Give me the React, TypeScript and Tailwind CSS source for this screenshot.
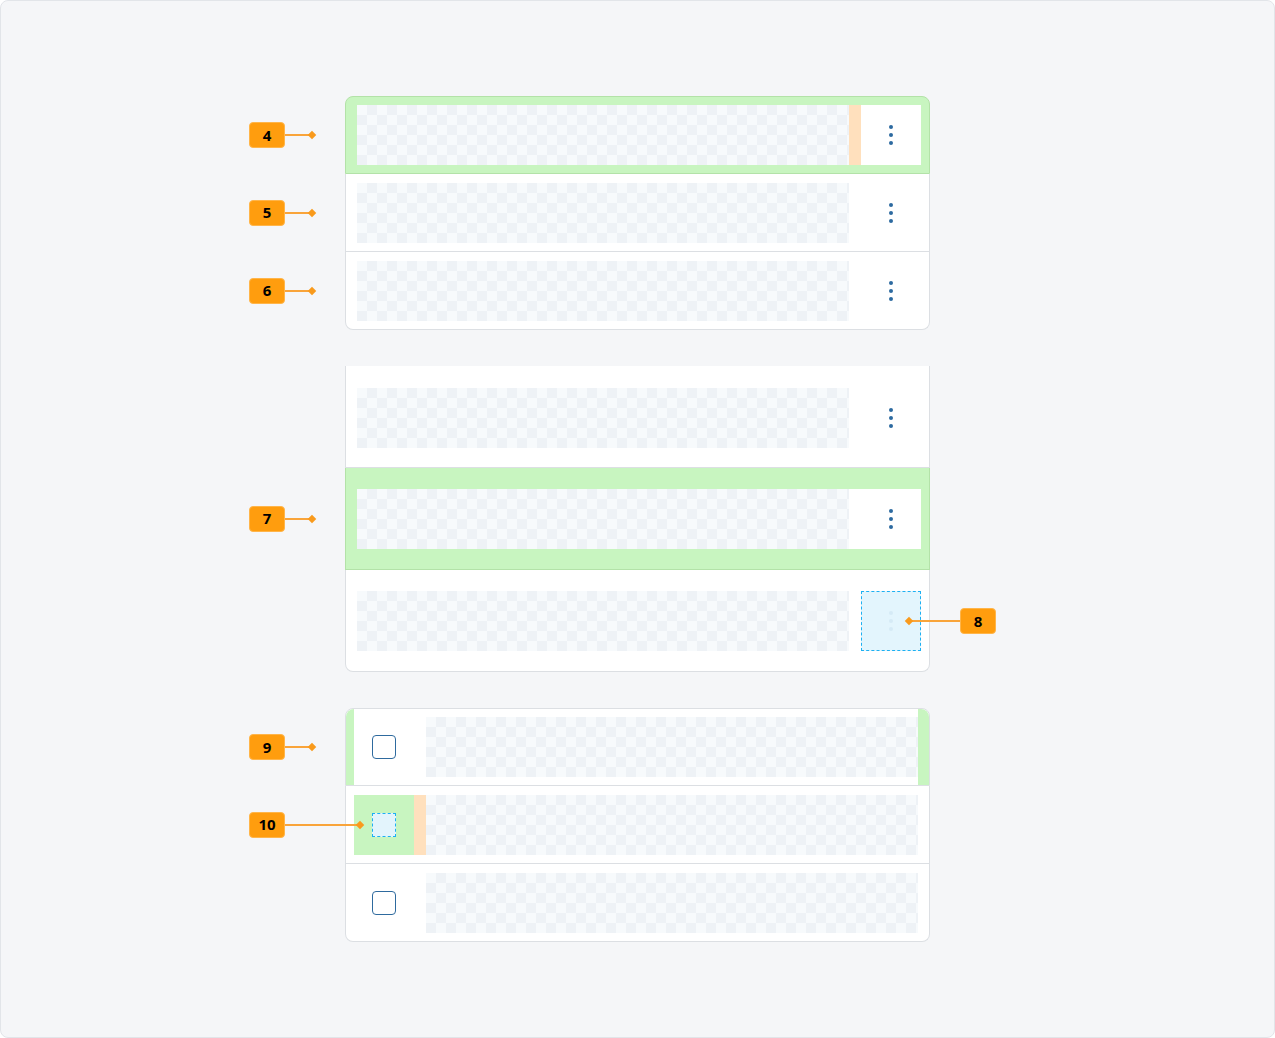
import React from 'react';

const checker =
    'bg-[image:repeating-conic-gradient(#eef2f6_0_25%,#f7fafc_0_50%)] bg-[length:20px_20px]';

const Dots = ({ faint = false }: { faint?: boolean }) => (
    <div className={`flex flex-col items-center gap-1 ${faint ? 'opacity-[0.07]' : ''}`}>
        <span className="w-1 h-1 rounded-full bg-[#2c6aa0]" />
        <span className="w-1 h-1 rounded-full bg-[#2c6aa0]" />
        <span className="w-1 h-1 rounded-full bg-[#2c6aa0]" />
    </div>
);

const Badge = ({ n }: { n: number }) => (
    <div className="w-9 h-[26px] rounded-[4px] bg-[#ff9d0e] border border-[#ffb54a] flex items-center justify-center text-[15px] font-bold text-black">
        {n}
    </div>
);

// left-side callout: badge, line, diamond
const Callout = ({ n, line = 27 }: { n: number; line?: number }) => (
    <div className="absolute left-[-97px] top-1/2 -translate-y-1/2 flex items-center z-10">
        <Badge n={n} />
        <div className="h-[2px] bg-[#f9a43a]" style={{ width: line }} />
        <div className="w-[6px] h-[6px] rotate-45 bg-[#f99a1c] -ml-[3px]" />
    </div>
);

const Checkbox = ({ dashed = false }: { dashed?: boolean }) =>
    dashed ? (
        <div className="w-6 h-6 border-[1.5px] border-dashed border-[#1db0f2] bg-[#e3f4fc]" />
    ) : (
        <div className="w-6 h-6 rounded-[4px] border-[1.5px] border-[#2e6a9e] bg-white" />
    );

const Kebab = () => (
    <div className="w-[60px] h-[60px] bg-white flex items-center justify-center">
        <Dots />
    </div>
);

export default function App() {
    return (
        <div className="w-[1275px] h-[1038px] bg-[#f5f6f8] border border-[#e2e5e9] rounded-lg font-['Open_Sans','Noto_Sans',sans-serif]">
            <div className="pt-[95px] pl-[344px] flex flex-col gap-[36px]">
                {/* list one */}
                <div className="w-[585px] flex flex-col">
                    <div className="relative h-[78px] flex items-center pl-[11px] pr-2 bg-[#c8f5c0] border border-[#b3e2a8] rounded-t-lg">
                        <Callout n={4} />
                        <div className={`w-[492px] h-[60px] ${checker}`} />
                        <div className="w-3 h-[60px] bg-[#ffe0bd]" />
                        <Kebab />
                    </div>
                    <div className="relative h-[78px] flex items-center pl-[11px] pr-2 bg-white border-x border-b border-[#dcdfe3]">
                        <Callout n={5} />
                        <div className={`w-[492px] h-[60px] ${checker}`} />
                        <div className="w-3 h-[60px]" />
                        <Kebab />
                    </div>
                    <div className="relative h-[78px] flex items-center pl-[11px] pr-2 bg-white border-x border-b border-[#dcdfe3] rounded-b-lg">
                        <Callout n={6} />
                        <div className={`w-[492px] h-[60px] ${checker}`} />
                        <div className="w-3 h-[60px]" />
                        <Kebab />
                    </div>
                </div>

                {/* list two, scrolled */}
                <div className="w-[585px] flex flex-col">
                    <div className="h-[102px] flex items-start pt-[22px] pl-[11px] pr-2 bg-white border-x border-b border-[#dcdfe3]">
                        <div className={`w-[492px] h-[60px] ${checker}`} />
                        <div className="w-3 h-[60px]" />
                        <Kebab />
                    </div>
                    <div className="relative h-[102px] flex items-start pt-[21px] pl-[11px] pr-2 bg-[#c8f5c0] border-x border-b border-[#b3e2a8]">
                        <Callout n={7} />
                        <div className="flex bg-white">
                            <div className={`w-[492px] h-[60px] ${checker}`} />
                            <div className="w-3 h-[60px]" />
                            <Kebab />
                        </div>
                    </div>
                    <div className="h-[102px] flex items-start pt-[21px] pl-[11px] pr-2 bg-white border-x border-b border-[#dcdfe3] rounded-b-lg">
                        <div className={`w-[492px] h-[60px] ${checker}`} />
                        <div className="w-3 h-[60px]" />
                        <div className="relative w-[60px] h-[60px] border-[1.5px] border-dashed border-[#1db0f2] bg-[#e3f5fd] flex items-center justify-center">
                            <Dots faint />
                            <div className="absolute left-[44px] top-1/2 -translate-y-1/2 flex items-center">
                                <div className="w-[6px] h-[6px] rotate-45 bg-[#f99a1c] -mr-[3px]" />
                                <div className="w-[51px] h-[2px] bg-[#f9a43a]" />
                                <Badge n={8} />
                            </div>
                        </div>
                    </div>
                </div>

                {/* list three, checkboxes */}
                <div className="w-[585px] flex flex-col">
                    <div className="relative h-[78px] flex items-stretch bg-white border border-[#dcdfe3] rounded-t-lg">
                        <Callout n={9} />
                        <div className="w-2 bg-[#c8f5c0] rounded-tl-lg" />
                        <div className="flex items-center py-2">
                            <div className="w-[60px] h-[60px] flex items-center justify-center">
                                <Checkbox />
                            </div>
                            <div className="w-3 h-[60px]" />
                            <div className={`w-[492px] h-[60px] ${checker}`} />
                        </div>
                        <div className="flex-1 bg-[#c8f5c0] rounded-tr-lg" />
                    </div>
                    <div className="relative h-[78px] flex items-center pl-2 pr-[11px] bg-white border-x border-b border-[#dcdfe3]">
                        <Callout n={10} line={75} />
                        <div className="w-[60px] h-[60px] bg-[#c8f5c0] flex items-center justify-center">
                            <Checkbox dashed />
                        </div>
                        <div className="w-3 h-[60px] bg-[#ffe0bd]" />
                        <div className={`w-[492px] h-[60px] ${checker}`} />
                    </div>
                    <div className="relative h-[78px] flex items-center pl-2 pr-[11px] bg-white border-x border-b border-[#dcdfe3] rounded-b-lg">
                        <div className="w-[60px] h-[60px] flex items-center justify-center">
                            <Checkbox />
                        </div>
                        <div className="w-3 h-[60px]" />
                        <div className={`w-[492px] h-[60px] ${checker}`} />
                    </div>
                </div>
            </div>
        </div>
    );
}
